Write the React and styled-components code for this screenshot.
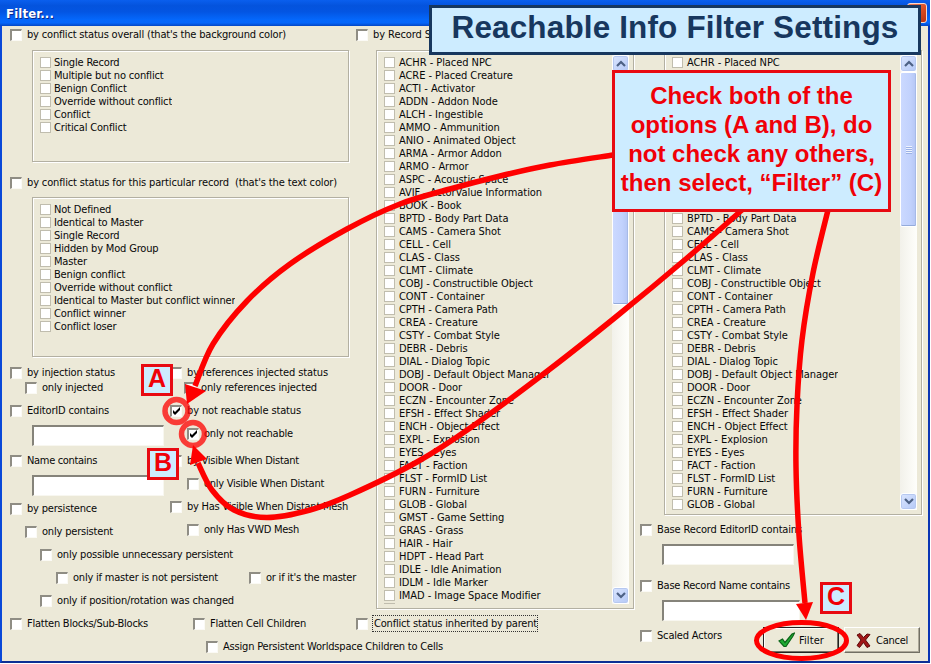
import React from 'react';
import styled, { createGlobalStyle } from 'styled-components';

const Global = createGlobalStyle`
  * { box-sizing: border-box; }
  body { margin: 0; background: #fff; }
`;

const Stage = styled.div`
  position: relative;
  width: 931px;
  height: 664px;
  overflow: hidden;
  font-family: "DejaVu Sans Condensed", "DejaVu Sans", sans-serif;
  font-stretch: condensed;
  font-size: 11px;
  color: #080808;
`;
const Window = styled.div`
  width: 930px;
  height: 663px;
  display: flex;
  flex-direction: column;
  background: #ece9d8;
  border: solid #0a48d8;
  border-width: 0 2px 2px 2px;
  border-right-color: #0a35b4;
  border-bottom-color: #0c2f94;
`;
const TitleBar = styled.header`
  flex: none;
  height: 26px;
  margin: 0 -2px;
  padding: 0 3px 0 6px;
  display: flex;
  align-items: center;
  justify-content: space-between;
  background: linear-gradient(#0a5fee 0%, #0453dd 22%, #0355e2 45%, #0467fb 75%, #0466fa 88%, #0346c4 100%);
`;
const TitleText = styled.h1`
  margin: 0;
  font: bold 13px "DejaVu Sans Condensed", "DejaVu Sans", sans-serif;
  color: #fff;
  text-shadow: 1px 1px 0 #0a2a8c;
`;
const CloseButton = styled.button`
  width: 20px;
  height: 20px;
  padding: 0;
  border: 1px solid #f4d8d0;
  border-radius: 3px;
  background: linear-gradient(135deg, #e88060, #d84a20 60%, #b83010);
`;
const Body = styled.main`
  flex: 1;
  display: grid;
  grid-template-columns: 638px 1fr;
`;
const Filters = styled.div`
  display: grid;
  grid-template-columns: 346px 1fr;
  grid-template-rows: 582px 1fr;
`;
const Column = styled.section`
  display: flex;
  flex-direction: column;
  padding: ${(p) => p.$pad || '2px 0 0 8px'};
`;
const Bottom = styled.footer`
  grid-column: 1 / -1;
  padding: 9px 0 0 8px;
`;
const Line = styled.div`
  display: flex;
  height: 13px;
  margin-top: ${(p) => p.$top || 0}px;
  margin-bottom: ${(p) => p.$bottom || 0}px;
  padding-left: ${(p) => p.$indent || 0}px;
`;
const CheckLabel = styled.label`
  display: flex;
  align-items: center;
  flex: none;
  height: 13px;
  width: ${(p) => (p.$w ? p.$w + 'px' : 'auto')};
  margin-top: ${(p) => p.$top || 0}px;
  margin-left: ${(p) => p.$indent || 0}px;
  gap: 5px;
  white-space: pre;
`;
const Box = styled.span`
  flex: none;
  width: 12px;
  height: 12px;
  background: #fff;
  border: solid;
  border-width: 2px 1px 1px 2px;
  border-color: #8f8d84 #fbfaf5 #fbfaf5 #8f8d84;
  svg { display: block; }
`;
const FlatBox = styled.span`
  flex: none;
  width: 11px;
  height: 11px;
  background: #fff;
  border: 1px solid #c0bdae;
`;
const FocusText = styled.span`
  height: 17px;
  margin-left: -1px;
  padding: 1px 0 0 1px;
  width: 166px;
  border: 1px dotted #333;
`;
const Group = styled.div`
  flex: none;
  display: flex;
  justify-content: space-between;
  width: ${(p) => p.$w}px;
  height: ${(p) => p.$h}px;
  margin: ${(p) => p.$m};
  padding: 4px 4px 4px 7px;
  border: 1px solid #b3b0a2;
  box-shadow: 1px 1px 0 #fff, inset 1px 1px 0 #fff;
  overflow: hidden;
`;
const List = styled.ul`
  list-style: none;
  margin: 0;
  padding: 1px 0 0;
  overflow: hidden;
  letter-spacing: ${(p) => (p.$records ? -0.06 : -0.17)}px;
`;
const Item = styled.li`
  display: flex;
  align-items: center;
  gap: ${(p) => (p.$records ? 4 : 3)}px;
  height: 13px;
  white-space: nowrap;
`;
const Scrollbar = styled.div`
  display: flex;
  flex-direction: column;
  width: 17px;
  background: linear-gradient(90deg, #f2f1ea, #fefefb);
`;
const ScrollButton = styled.button`
  flex: none;
  display: flex;
  align-items: center;
  justify-content: center;
  height: 17px;
  padding: 0;
  border: 1px solid #fff;
  border-radius: 3px;
  background: linear-gradient(135deg, #dbe6ff, #b4c8f6);
  box-shadow: inset 0 0 0 1px #b6c8f0;
`;
const Thumb = styled.div`
  flex: none;
  display: flex;
  align-items: center;
  justify-content: center;
  height: ${(p) => p.$h}px;
  border: 1px solid #fff;
  border-radius: 2px;
  background: linear-gradient(90deg, #cbd9ff, #c2d2fd 60%, #b5c6f4);
  box-shadow: inset 0 -1px 0 #94abdb, inset -1px 0 0 #a6bae8;
`;
const Grip = styled.span`
  width: 6px;
  height: 8px;
  background: repeating-linear-gradient(#eef3ff 0 1px, #9cb2e6 1px 2px);
`;
const Spacer = styled.div`
  flex: 1;
`;
const Pair = styled.div`
  display: grid;
  grid-template-columns: 160px 1fr;
`;
const Stack = styled.div`
  display: flex;
  flex-direction: column;
`;
const Input = styled.input`
  flex: none;
  width: ${(p) => p.$w || 132}px;
  height: 21px;
  margin: ${(p) => p.$top}px 0 0 22px;
  padding: 0;
  background: #fff;
  border: solid;
  border-width: 2px 1px 1px 2px;
  border-color: #85837a #f8f7f0 #f8f7f0 #85837a;
`;
const Actions = styled.div`
  display: flex;
  align-items: flex-start;
`;
const Buttons = styled.div`
  display: flex;
  gap: 5px;
  margin-left: auto;
  padding: 6px 8px 0 0;
`;
const Button = styled.button`
  display: flex;
  align-items: center;
  justify-content: center;
  gap: ${(p) => (p.$default ? 4 : 5)}px;
  width: 76px;
  height: 26px;
  padding: 0;
  font: inherit;
  color: #080808;
  background: #ece9d8;
  border: 1px solid;
  border-color: ${(p) => (p.$default ? '#222' : '#fff #716f64 #716f64 #fff')};
  box-shadow: ${(p) => (p.$default ? 'inset 1px 1px 0 #fff, inset -1px -1px 0 #716f64' : 'inset -1px -1px 0 #aca899')};
`;
const Overlay = styled.svg`
  position: absolute;
  inset: 0;
`;
const Callout = styled.div`
  position: absolute;
  left: ${(p) => p.$x}px;
  top: ${(p) => p.$y}px;
  width: ${(p) => p.$w}px;
  height: ${(p) => p.$h}px;
  display: flex;
  align-items: center;
  justify-content: center;
  text-align: center;
  white-space: pre;
  background: #cdecff;
  border: 3px solid ${(p) => p.$color || '#e80a12'};
  color: ${(p) => p.$color || '#f00008'};
  font: bold ${(p) => p.$size}px/${(p) => p.$lh || p.$size}px "Liberation Sans", Arial, sans-serif;
  padding-bottom: ${(p) => p.$pb || 0}px;
`;

const RECORDS = [
  'ACHR - Placed NPC', 'ACRE - Placed Creature', 'ACTI - Activator', 'ADDN - Addon Node',
  'ALCH - Ingestible', 'AMMO - Ammunition', 'ANIO - Animated Object', 'ARMA - Armor Addon',
  'ARMO - Armor', 'ASPC - Acoustic Space', 'AVIF - ActorValue Information', 'BOOK - Book',
  'BPTD - Body Part Data', 'CAMS - Camera Shot', 'CELL - Cell', 'CLAS - Class', 'CLMT - Climate',
  'COBJ - Constructible Object', 'CONT - Container', 'CPTH - Camera Path', 'CREA - Creature',
  'CSTY - Combat Style', 'DEBR - Debris', 'DIAL - Dialog Topic', 'DOBJ - Default Object Manager',
  'DOOR - Door', 'ECZN - Encounter Zone', 'EFSH - Effect Shader', 'ENCH - Object Effect',
  'EXPL - Explosion', 'EYES - Eyes', 'FACT - Faction', 'FLST - FormID List', 'FURN - Furniture',
  'GLOB - Global', 'GMST - Game Setting', 'GRAS - Grass', 'HAIR - Hair', 'HDPT - Head Part',
  'IDLE - Idle Animation', 'IDLM - Idle Marker', 'IMAD - Image Space Modifier',
];
const OVERALL = ['Single Record', 'Multiple but no conflict', 'Benign Conflict', 'Override without conflict', 'Conflict', 'Critical Conflict'];
const PARTICULAR = ['Not Defined', 'Identical to Master', 'Single Record', 'Hidden by Mod Group', 'Master', 'Benign conflict',
  'Override without conflict', 'Identical to Master but conflict winner', 'Conflict winner', 'Conflict loser'];

// Fits the tracking of a label so that it takes the given width in px.
function Fit({ width, children }) {
  const ref = React.useRef(null);
  const [tracking, setTracking] = React.useState(0);
  React.useLayoutEffect(() => {
    const natural = ref.current.getBoundingClientRect().width;
    setTracking((width - natural) / children.length);
  }, [width, children]);
  return <span ref={ref} style={{ letterSpacing: `${tracking}px` }}>{children}</span>;
}

function Check({ label, fit, checked, ...rest }) {
  return (
    <CheckLabel {...rest}>
      <Box>
        {checked && (
          <svg width="9" height="9" viewBox="0 0 9 9"><path d="M1 3v3l2 2 5-5V0L3 5z" fill="#000" /></svg>
        )}
      </Box>
      {fit ? <Fit width={fit}>{label}</Fit> : label}
    </CheckLabel>
  );
}
const Items = ({ names, records, partial }) => (
  <List $records={records}>
    {names.map((n) => <Item key={n} $records={records}><FlatBox />{n}</Item>)}
    {partial && <Item><FlatBox /></Item>}
  </List>
);
const Chevron = ({ down }) => (
  <svg width="10" height="7" viewBox="0 0 10 7">
    <path d={down ? 'M1 1l4 4 4-4' : 'M1 6l4-4 4 4'} fill="none" stroke="#4d6185" strokeWidth="2.2" />
  </svg>
);
const ScrollTrack = ({ thumb, grip }) => (
  <Scrollbar>
    <ScrollButton aria-label="Scroll up"><Chevron /></ScrollButton>
    <Thumb $h={thumb}>{grip && <Grip />}</Thumb>
    <Spacer />
    <ScrollButton aria-label="Scroll down"><Chevron down /></ScrollButton>
  </Scrollbar>
);

// Smooth curve through a list of points (Catmull-Rom converted to cubic segments).
function curve(pts) {
  let d = `M${pts[0]}`;
  for (let i = 0; i < pts.length - 1; i += 1) {
    const a = pts[i - 1] || pts[i];
    const b = pts[i];
    const c = pts[i + 1];
    const e = pts[i + 2] || c;
    d += `C${b[0] + (c[0] - a[0]) / 6},${b[1] + (c[1] - a[1]) / 6} ${c[0] - (e[0] - b[0]) / 6},${c[1] - (e[1] - b[1]) / 6} ${c}`;
  }
  return d;
}
const ARROWS = [
  [[613, 155], [550, 165], [500, 176], [450, 189], [400, 204], [347, 229], [290, 264], [247, 301], [213, 344], [195, 386]],
  [[742, 210], [687, 258], [617, 316], [550, 369], [473, 426], [417, 462], [350, 495], [310, 510], [267, 517.5], [234, 510], [212, 490], [198, 463]],
  [[828, 210], [813, 273], [802, 340], [797, 405], [796, 467], [799, 535], [805, 603]],
];

export default function App() {
  return (
    <Stage>
      <Global />
      <Window>
        <TitleBar>
          <TitleText><Fit width={48}>Filter...</Fit></TitleText>
          <CloseButton aria-label="Close" />
        </TitleBar>
        <Body>
          <Filters>
            <Column>
              <Check label="by conflict status overall (that's the background color)" fit={259} />
              <Group $w={317} $h={112} $m="9px 0 0 22px"><Items names={OVERALL} /></Group>
              <Check $top={14} label="by conflict status for this particular record  (that's the text color)" fit={310} />
              <Group $w={317} $h={160} $m="8px 0 0 22px"><Items names={PARTICULAR} /></Group>
              <Pair>
                <Stack>
                  <Check $top={9} label="by injection status" fit={88} />
                  <Check $top={2} $indent={15} label="only injected" fit={61} />
                  <Check $top={10} label="EditorID contains" fit={82} />
                  <Input $top={8} aria-label="EditorID" />
                  <Check $top={8} label="Name contains" fit={70} />
                  <Input $top={8} aria-label="Name" />
                  <Check $top={6} label="by persistence" fit={70} />
                  <Check $top={10} $indent={15} label="only persistent" fit={71} />
                </Stack>
                <Stack>
                  <Check $top={9} label="by references injected status" fit={141} />
                  <Check $top={2} $indent={14} label="only references injected" fit={116} />
                  <Check $top={10} label="by not reachable status" fit={114} checked />
                  <Check $top={10} $indent={17} label="only not reachable" fit={89} checked />
                  <Check $top={14} label="by Visible When Distant" fit={112} />
                  <Check $top={10} $indent={17} label="only Visible When Distant" fit={120} />
                  <Check $top={10} label="by Has Visible When Distant Mesh" fit={161} />
                  <Check $top={10} $indent={17} label="only Has VWD Mesh" fit={95} />
                </Stack>
              </Pair>
              <Check $top={10} $indent={30} label="only possible unnecessary persistent" fit={176} />
              <Line $top={10} $indent={46}>
                <Check $w={193} label="only if master is not persistent" fit={145} />
                <Check label="or if it's the master" fit={90} />
              </Line>
              <Check $top={10} $indent={30} label="only if position/rotation was changed" fit={177} />
            </Column>
            <Column>
              <Check label="by Record Signature" fit={99} />
              <Group $w={258} $h={559} $m="9px 0 0 20px">
                <Items names={RECORDS} records partial />
                <ScrollTrack thumb={233} />
              </Group>
            </Column>
            <Bottom>
              <Line $bottom={10}>
                <Check $w={183} label="Flatten Blocks/Sub-Blocks" fit={121} />
                <Check $w={163} label="Flatten Cell Children" fit={96} />
                <CheckLabel><Box /><FocusText><Fit width={163}>Conflict status inherited by parent</Fit></FocusText></CheckLabel>
              </Line>
              <Line $indent={196}>
                <Check label="Assign Persistent Worldspace Children to Cells" fit={220} />
              </Line>
            </Bottom>
          </Filters>
          <Column $pad="24px 0 0 0">
            <Group $w={258} $h={465} $m="0 0 0 24px">
              <Items names={RECORDS.slice(0, 35)} records />
              <ScrollTrack thumb={155} grip />
            </Group>
            <Check $top={8} label="Base Record EditorID contains" fit={145} />
            <Input $top={8} aria-label="Base Record EditorID" />
            <Check $top={14} label="Base Record Name contains" fit={133} />
            <Input $top={8} $w={138} aria-label="Base Record Name" />
            <Actions>
              <Check $top={8} label="Scaled Actors" fit={65} />
              <Buttons>
                <Button $default>
                  <svg width="17" height="16" viewBox="0 0 17 16">
                    <path d="M1 9l3.500-2L7 10.500 14 2l2.500-1L15 4 8 14.500H6z" fill="#20ac34" stroke="#0a6418" strokeWidth="1.200" />
                  </svg>
                  <Fit width={25}>Filter</Fit>
                </Button>
                <Button>
                  <svg width="15" height="15" viewBox="0 0 15 15">
                    <path d="M1 2l3-1.500L7.500 4.500 11 1l3 .5-4.500 5.500 4.500 6-3 1.500-3.500-5-4 5L1 12.500 5 7z" fill="#a01616" stroke="#5c0808" />
                  </svg>
                  <Fit width={32}>Cancel</Fit>
                </Button>
              </Buttons>
            </Actions>
          </Column>
        </Body>
      </Window>
      <Overlay width="931" height="664" viewBox="0 0 931 664" fill="none" stroke="#fe0000">
        {ARROWS.map((pts, i) => <path key={i} d={curve(pts)} strokeWidth="5.5" />)}
        <g fill="#fe0000" stroke="none">
          <path d="M187 404L185 384L206 391z" />
          <path d="M193 445L190 465L207 459z" />
          <path d="M806 620L796 604L813 602z" />
        </g>
        <circle cx="176.500" cy="411" r="11.500" strokeWidth="5.5" strokeOpacity=".75" />
        <circle cx="193" cy="434" r="11.500" strokeWidth="5.5" strokeOpacity=".75" />
        <ellipse cx="801.500" cy="640.500" rx="45" ry="18" strokeWidth="5" />
      </Overlay>
      <Callout $x={429} $y={5} $w={492} $h={50} $size={31.5} $color="#17375e" $pb={4}><Fit width={447}>Reachable Info Filter Settings</Fit></Callout>
      <Callout $x={612} $y={70} $w={279} $h={142} $size={24} $lh={29} $pb={4}>{'Check both of the\noptions (A and B), do\nnot check any others,\nthen select, “Filter” (C)'}</Callout>
      <Callout $x={141} $y={364} $w={32} $h={32} $size={25} $pb={3}>A</Callout>
      <Callout $x={147} $y={448} $w={32} $h={32} $size={25} $pb={3}>B</Callout>
      <Callout $x={820} $y={582} $w={32} $h={32} $size={25} $pb={3}>C</Callout>
    </Stage>
  );
}
